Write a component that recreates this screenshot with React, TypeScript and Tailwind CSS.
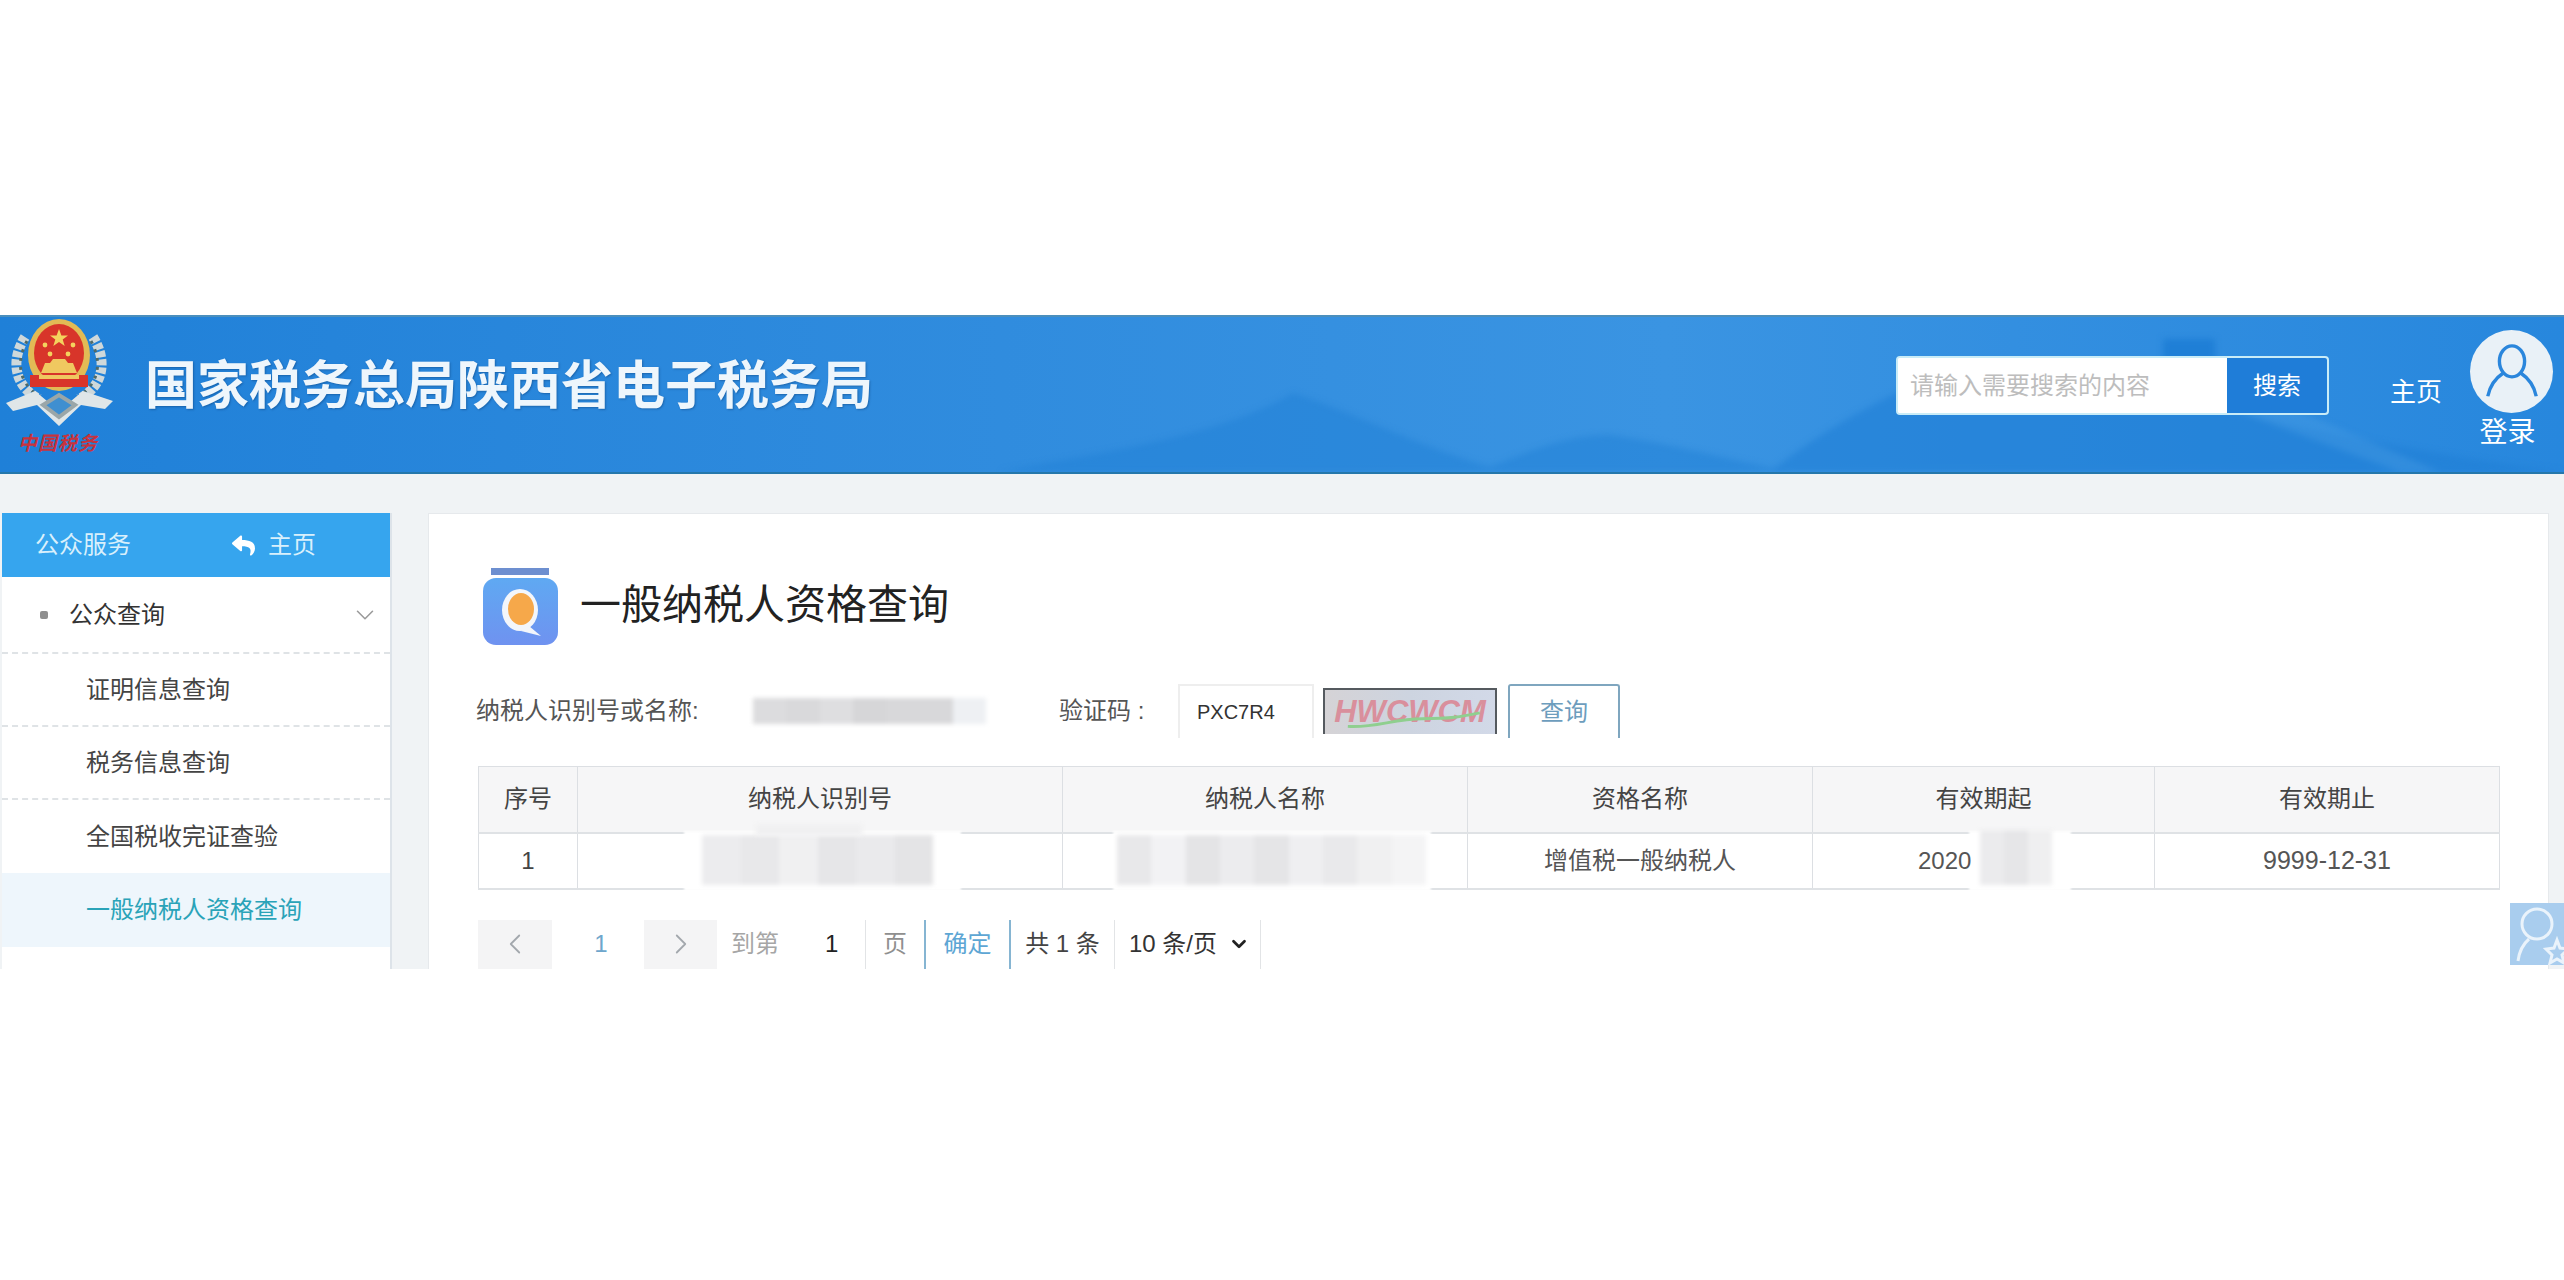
import React from 'react';
import { ChevronDown, ChevronLeft, ChevronRight } from 'lucide-react';
import { FaReply } from 'react-icons/fa';

const Emblem = () => (
  <div className="relative w-[112px] h-[145px] shrink-0">
    <svg viewBox="0 0 112 120" className="w-[112px] h-[120px] block">
      {/* wreath */}
      <path d="M22 20 C8 42 10 68 36 82" fill="none" stroke="#cfd8da" strokeWidth="10" strokeDasharray="6 2" />
      <path d="M90 20 C104 42 102 68 76 82" fill="none" stroke="#cfd8da" strokeWidth="10" strokeDasharray="6 2" />
      <path d="M24 24 C13 44 15 66 37 80" fill="none" stroke="#4f6a68" strokeWidth="3" strokeDasharray="3 6" />
      <path d="M88 24 C99 44 97 66 75 80" fill="none" stroke="#4f6a68" strokeWidth="3" strokeDasharray="3 6" />
      {/* ribbon */}
      <path d="M3 86 L32 74 L44 84 L56 98 L68 84 L80 74 L110 84 L102 92 L78 88 L56 109 L34 88 L10 94 Z" fill="#dfe6e8" />
      <path d="M40 88 L56 78 L72 88 L56 100 Z" fill="#3f8fd0" stroke="#9aa6a8" strokeWidth="4" />
      {/* badge */}
      <ellipse cx="56" cy="38" rx="31" ry="36" fill="#e2bb55" />
      <ellipse cx="56" cy="36" rx="25" ry="29" fill="#d8352a" />
      <path d="M56 12 l2.4 6.5 h6.6 l-5.3 4 2 6.5 -5.7-4 -5.7 4 2-6.5 -5.3-4 h6.6 Z" fill="#f4d35e" />
      <circle cx="42" cy="28" r="2.4" fill="#f4d35e" />
      <circle cx="70" cy="28" r="2.4" fill="#f4d35e" />
      <circle cx="47" cy="37" r="2.4" fill="#f4d35e" />
      <circle cx="65" cy="37" r="2.4" fill="#f4d35e" />
      <path d="M38 56 h36 l-4-10 h-5 l-3-4 h-12 l-3 4 h-5 Z" fill="#f0c860" />
      <rect x="27" y="58" width="58" height="12" fill="#d8352a" />
      <rect x="36" y="58" width="40" height="4" fill="#f0c860" />
    </svg>
    <div className="absolute left-[15px] top-[113px] text-[19px] leading-[24px] tracking-[1px] font-bold italic whitespace-nowrap text-[#c8323c] font-['Noto_Sans_CJK_SC',serif]">
      中国税务
    </div>
  </div>
);

const Mosaic = ({ shades, className }: { shades: string[]; className: string }) => (
  <div className={`absolute flex blur-[2px] ${className}`}>
    {shades.map((c, i) => (
      <div key={i} className="flex-1 h-full" style={{ background: c }} />
    ))}
  </div>
);

const menuItems = ['证明信息查询', '税务信息查询', '全国税收完证查验'];

const Sidebar = () => (
  <div className="w-[390px] shrink-0 bg-white border-r-2 border-[#dde3e9] self-stretch">
    <div className="h-[64px] bg-[#36a5ee] flex items-center text-[24px] text-[#d9f0fc]">
      <span className="ml-[33px] w-[195px]">公众服务</span>
      <FaReply className="w-[27px] h-[23px] text-white" />
      <span className="ml-[11px]">主页</span>
    </div>
    <div className="h-[77px] flex items-center border-b-2 border-dashed border-[#dfe3e6] text-[24px] text-[#333]">
      <span className="ml-[38px] w-[8px] h-[8px] bg-[#8f8f8f] rounded-[2px]" />
      <span className="ml-[21px] flex-1">公众查询</span>
      <ChevronDown className="mr-[10px] w-[30px] h-[30px] text-[#9a9a9a]" strokeWidth={1.25} />
    </div>
    {menuItems.map((label, i) => (
      <div
        key={label}
        className={`h-[73px] flex items-center pl-[84px] text-[24px] text-[#444] ${
          i < 2 ? 'border-b-2 border-dashed border-[#dfe3e6]' : ''
        }`}
      >
        {label}
      </div>
    ))}
    <div className="h-[74px] flex items-center pl-[84px] text-[24px] text-[#2aa3b8] bg-[#eef6fc]">一般纳税人资格查询</div>
  </div>
);

const Th = ({ children }: { children: React.ReactNode }) => (
  <th className="border-r border-[#dcdfe3] font-normal text-[24px] text-[#444] text-center">{children}</th>
);

const Td = ({ children }: { children?: React.ReactNode }) => (
  <td className="relative border-r border-[#dcdfe3] text-center text-[24px] text-[#555]">{children}</td>
);

const ResultTable = () => (
  <table className="mt-[28px] w-[2021px] table-fixed border-collapse border border-[#dcdfe3]">
    <colgroup>
      <col className="w-[99px]" />
      <col className="w-[485px]" />
      <col className="w-[405px]" />
      <col className="w-[345px]" />
      <col className="w-[342px]" />
      <col className="w-[345px]" />
    </colgroup>
    <thead>
      <tr className="h-[66px] bg-[#f6f6f7] border-b-2 border-[#dfe2e5]">
        <Th>序号</Th>
        <Th>纳税人识别号</Th>
        <Th>纳税人名称</Th>
        <Th>资格名称</Th>
        <Th>有效期起</Th>
        <Th>有效期止</Th>
      </tr>
    </thead>
    <tbody>
      <tr className="h-[56px] border-b-2 border-[#dfe2e5]">
        <Td>
          <span className="text-[#444]">1</span>
        </Td>
        <Td>
          <div className="absolute left-[106px] top-[-3px] bottom-[-3px] w-[277px] bg-white blur-[1px]" />
          <Mosaic
            className="left-[124px] top-[1px] bottom-[3px] w-[231px]"
            shades={['#ececee', '#e8e8ea', '#f0f0f1', '#e6e6e8', '#eaeaec', '#e4e4e6']}
          />
          <div className="absolute left-[178px] top-[-10px] h-[12px] w-[106px] bg-[#f0f0f1] blur-[2px]" />
        </Td>
        <Td>
          <div className="absolute left-[50px] top-[-3px] bottom-[-3px] w-[318px] bg-white blur-[1px]" />
          <Mosaic
            className="left-[54px] top-[1px] bottom-[3px] w-[309px]"
            shades={['#e8e8ea', '#f2f2f4', '#e4e4e6', '#ececee', '#e5e5e7', '#efeff1', '#e9e9eb', '#f0f0f1', '#f4f4f5']}
          />
        </Td>
        <Td>增值税一般纳税人</Td>
        <Td>
          <div className="absolute left-[156px] top-[-3px] bottom-[-3px] w-[102px] bg-white blur-[1px]" />
          <span className="absolute left-[105px] top-[9px]">2020</span>
          <Mosaic className="left-[167px] top-[-4px] bottom-[3px] w-[72px]" shades={['#ebebed', '#e6e6e8', '#efeff0']} />
        </Td>
        <Td>
          <span className="text-[25px]">9999-12-31</span>
        </Td>
      </tr>
    </tbody>
  </table>
);

const Pagination = () => (
  <div className="mt-[30px] flex items-center h-[49px] text-[24px]">
    <div className="w-[74px] h-full bg-[#f4f4f5] flex items-center justify-center">
      <ChevronLeft className="w-[34px] h-[34px] text-[#a3a8ad]" strokeWidth={1.25} />
    </div>
    <div className="w-[92px] pl-[6px] text-center text-[#6ea6cc]">1</div>
    <div className="w-[73px] h-full bg-[#f4f4f5] flex items-center justify-center">
      <ChevronRight className="w-[34px] h-[34px] text-[#a3a8ad]" strokeWidth={1.25} />
    </div>
    <div className="w-[149px] h-full flex items-center border-r border-[#e2e4e6] pl-[14px]">
      <span className="text-[#a6a6a6]">到第</span>
      <span className="ml-[46px] text-[#222]">1</span>
    </div>
    <div className="w-[60px] h-full flex items-center justify-center text-[#8f8f8f] border-r-2 border-[#86b5d2]">页</div>
    <div className="w-[85px] h-full flex items-center justify-center text-[#5da6d4] border-r-2 border-[#86b5d2]">确定</div>
    <div className="w-[104px] h-full flex items-center justify-center text-[#444] border-r border-[#e2e4e6]">共 1 条</div>
    <div className="w-[146px] h-full flex items-center pl-[14px] gap-[11px] text-[#333] border-r border-[#e2e4e6]">
      <span className="whitespace-nowrap">10 条/页</span>
      <ChevronDown className="w-[22px] h-[22px] text-[#222]" strokeWidth={3} />
    </div>
  </div>
);

const App = () => {
  return (
    <div className="w-full h-[1280px] bg-white overflow-hidden font-['Liberation_Sans','Noto_Sans_CJK_SC',sans-serif]">
      <div className="h-[315px]" />

      {/* Header */}
      <header className="relative h-[159px] overflow-hidden border-t-2 border-b-2 border-t-[#4b8fbd] border-b-[#2577ab] bg-gradient-to-r from-[#1f80d8] via-[#3a94e2] via-65% to-[#2787dd] flex items-center">
        <svg viewBox="0 0 2564 155" preserveAspectRatio="none" className="absolute inset-0 w-full h-full blur-[3px]">
          <path d="M1000 155 C1100 135 1220 120 1293 76 C1340 90 1420 130 1490 150 C1540 130 1570 118 1611 118 C1660 125 1720 140 1790 155 Z" fill="#1f7fd6" opacity="0.5" />
          <path d="M1770 155 C1820 115 1880 80 1960 48 C2040 55 2200 85 2300 110 C2400 130 2480 145 2564 155 Z" fill="#1f7fd6" opacity="0.6" />
          <rect x="2163" y="22" width="52" height="22" fill="#1f7fd6" />
          <path d="M2240 95 L2400 155 L2440 155 L2290 90 Z" fill="#4ea0e4" opacity="0.35" />
        </svg>
        <div className="relative flex items-center w-full h-full">
          <div className="ml-[3px] self-start">
            <Emblem />
          </div>
          <h1 className="ml-[30px] mt-[-26px] text-[52px] leading-none font-bold whitespace-nowrap text-[#eef6fc] [text-shadow:1px_1px_2px_rgba(0,40,90,0.35)] font-['Noto_Sans_CJK_SC',sans-serif]">
            国家税务总局陕西省电子税务局
          </h1>
          <div className="ml-auto flex items-center h-[59px] w-[433px] mt-[-18px] bg-white rounded-[4px] border-2 border-[#c9ecf7] overflow-hidden">
            <input
              placeholder="请输入需要搜索的内容"
              className="flex-1 min-w-0 h-full pl-[12px] text-[24px] outline-none bg-white placeholder:text-[#bdbdbd]"
            />
            <div className="w-[100px] h-full flex items-center justify-center bg-[#1f7dd8] text-[24px] text-white">搜索</div>
          </div>
          <div className="ml-[61px] mt-[-5px] text-[26px] text-white whitespace-nowrap">主页</div>
          <div className="ml-[28px] mr-[11px] self-start mt-[13px] flex flex-col items-center w-[83px]">
            <div className="w-[83px] h-[83px] rounded-full bg-[#e9f1f7] flex items-center justify-center">
              <svg viewBox="0 0 64 64" className="w-[62px] h-[62px]" fill="none" stroke="#2a86dc" strokeWidth="3.5">
                <ellipse cx="32" cy="21" rx="13" ry="16" />
                <path d="M23 33 C14 39 9 47 7 57" />
                <path d="M41 33 C50 39 55 47 57 57" />
              </svg>
            </div>
            <div className="mt-[3px] mr-[8px] text-[28px] leading-[34px] text-white whitespace-nowrap">登录</div>
          </div>
        </div>
      </header>

      {/* Body, the shot cuts it off at the bottom */}
      <div className="relative h-[495px] overflow-hidden bg-[#f0f3f5] flex items-start pt-[39px] pl-[2px] pr-[15px]">
        <Sidebar />
        <main className="relative ml-[36px] flex-1 self-stretch bg-white border-t border-x border-[#e6e9ec] pl-[49px] pt-[54px]">
          <div className="flex items-center h-[77px] pl-[5px]">
            <svg viewBox="0 0 75 77" className="w-[75px] h-[77px] shrink-0">
              <defs>
                <linearGradient id="jar" x1="0" y1="0" x2="0" y2="1">
                  <stop offset="0" stopColor="#5fa9f2" />
                  <stop offset="1" stopColor="#6f92f0" />
                </linearGradient>
              </defs>
              <rect x="8" y="0" width="58" height="7" fill="#6d8fd0" />
              <rect x="0" y="10" width="75" height="67" rx="13" fill="url(#jar)" />
              <ellipse cx="37" cy="42" rx="18" ry="21" fill="#f3f6fb" />
              <path d="M46 58 L58 68 L38 63 Z" fill="#f3f6fb" />
              <ellipse cx="38" cy="41" rx="13" ry="16" fill="#f6a84a" />
            </svg>
            <h2 className="ml-[22px] mt-[-2px] text-[41px] font-normal text-[#222] whitespace-nowrap">一般纳税人资格查询</h2>
          </div>

          <div className="mt-[39px] flex items-center h-[54px] text-[24px]">
            <span className="ml-[-2px] w-[224px] whitespace-nowrap text-[#555]">纳税人识别号或名称:</span>
            <div className="relative w-[233px] ml-[53px] h-[26px]">
              <Mosaic className="inset-0" shades={['#dcdcde', '#d9d9db', '#dedee0', '#d6d6d8', '#d8d8da', '#d8d8da', '#eef0f3']} />
            </div>
            <span className="ml-[73px] w-[119px] whitespace-nowrap text-[#555]">验证码 :</span>
            <input
              readOnly
              value="PXC7R4"
              className="w-[136px] h-full pl-[17px] text-[20px] text-[#333] bg-white outline-none border-t-2 border-x-2 border-[#eeeeee]"
            />
            <div className="relative ml-[9px] w-[174px] h-[46px] overflow-hidden border-t-2 border-x-2 border-[#555a5f] bg-gradient-to-r from-[#d5d3d6] via-[#cdd4e0] to-[#d2d9e8] flex items-center justify-center">
              <span className="text-[31px] italic font-bold text-[#d98f9c] whitespace-nowrap">HWCWCM</span>
              <svg viewBox="0 0 174 46" className="absolute inset-0 w-full h-full" fill="none">
                <path d="M22 38 C50 40 70 30 100 30 S140 28 160 24" stroke="#8fcf8f" strokeWidth="3" />
              </svg>
            </div>
            <div className="ml-[11px] w-[112px] h-full border-t-2 border-x-2 border-[#7fa6bf] rounded-t-[3px] flex items-center justify-center text-[24px] text-[#6d9dbd]">
              查询
            </div>
          </div>

          <ResultTable />
          <Pagination />
        </main>
        <div className="absolute right-0 top-[429px] w-[54px] h-[62px] bg-[#a9cdee] overflow-hidden">
          <svg viewBox="0 0 54 62" className="w-[54px] h-[62px]" fill="none" stroke="#eaf3fb" strokeWidth="3">
            <circle cx="27" cy="21" r="15" />
            <path d="M19 36 C12 42 9 50 8 58" />
            <path d="M47 37 L50 45 L58 46 L52 52 L54 60 L47 56 L40 60 L42 52 L36 46 L44 45 Z" />
          </svg>
        </div>
      </div>
    </div>
  );
};

export default App;
